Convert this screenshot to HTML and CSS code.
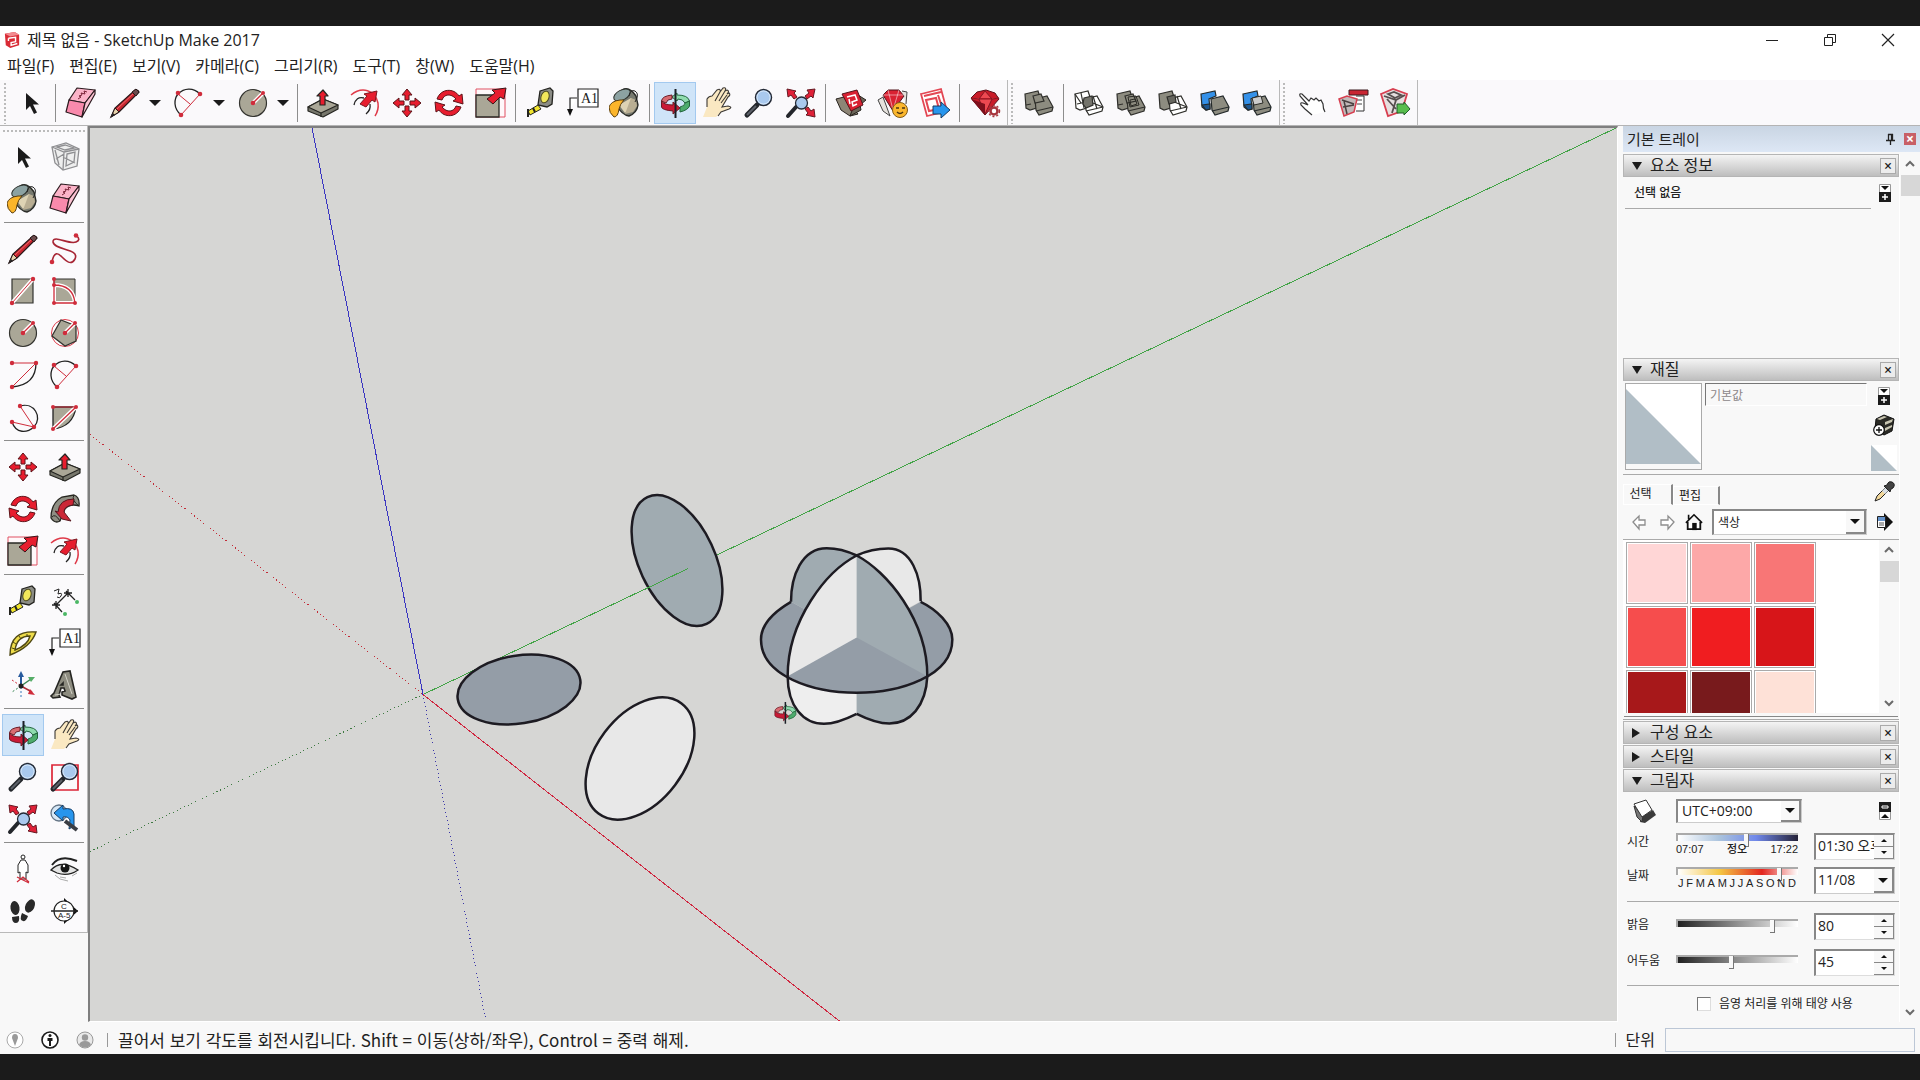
FILE: index.html
```html
<!DOCTYPE html>
<html lang="ko">
<head>
<meta charset="utf-8">
<title>제목 없음 - SketchUp Make 2017</title>
<link rel="stylesheet" href="styles.css">
</head>
<body>
<svg class="sprite" aria-hidden="true">
  <symbol id="cursor" viewBox="0 0 32 32"><path d="M11 6v17l4-4 4 8 3-1.500-4-8h6z" fill="#1b1b1b"/></symbol>
  <symbol id="eraser" viewBox="0 0 32 32"><g stroke="#2a1a1e" stroke-width="1.200" stroke-linejoin="round"><path d="M12 1 30 3 20 16 4 13Z" fill="#fbb3c8"/><path d="M4 13 20 16 17 30 1 25Z" fill="#f98aac"/><path d="M30 3v4L17 30l3-14Z" fill="#fcc3d3"/></g><path d="M13 12l3-2-2-1 3-1-1-2 4 1-1-3 3 1" fill="none" stroke="#7a2438"/></symbol>
  <symbol id="pencil" viewBox="0 0 32 32"><path d="M2 30 6 21 26 3q3-1 4 2L10 25Z" fill="#c8252f" stroke="#28191a" stroke-width="1.200"/><path d="M2 30 6 21l4 4Z" fill="#e8d3ac" stroke="#28191a"/><path d="M2 30l2-4 2 2Z" fill="#222"/><path d="M8 22 25 6" stroke="#ee6c6c"/><path d="m23 5 4 4 3-4-3-3Z" fill="#6b4a4c" stroke="#28191a"/></symbol>
  <symbol id="arc" viewBox="0 0 32 32"><path d="M8 28C0 21 1 12 5 7 11 1 20 0 27 7" fill="none" stroke="#222" stroke-width="1.300"/><path d="M8 28 27 7M5 7 17 17" stroke="#cf2c3b"/><g fill="#cf2c3b"><circle cx="8" cy="28" r="2.300"/><circle cx="27" cy="7" r="2.300"/><circle cx="5" cy="6" r="2.300"/></g></symbol>
  <symbol id="circle" viewBox="0 0 32 32"><circle cx="16" cy="16" r="13.500" fill="#aaa797" stroke="#33332f" stroke-width="1.200"/><path d="M16 16 26 6" stroke="#fff" stroke-width="4"/><path d="M16 16 26 6" stroke="#cf2c3b" stroke-width="1.300"/><g fill="#cf2c3b"><circle cx="16" cy="16" r="2.300"/><circle cx="26" cy="6" r="2"/></g></symbol>
  <symbol id="push" viewBox="0 0 32 32"><g stroke="#252521" stroke-linejoin="round" stroke-width="1.200"><path d="M1 20 16 12 31 18v4L16 30 1 24Z" fill="#77776c"/><path d="M1 20 16 12 31 18 14 26Z" fill="#aaa797"/><path d="M14 26v4" /><path d="M16 3 21 9h-3v9h-5V9h-3Z" fill="#e71d2e"/></g></symbol>
  <symbol id="offset" viewBox="0 0 32 32"><path d="M2 8C13-1 26 3 29 16q1 7-3 13" fill="none" stroke="#df3a49" stroke-width="1.500"/><path d="M5 18Q7 9 15 11M21 17q1 6-4 10" fill="none" stroke="#222" stroke-width="1.300"/><path d="M28 4 26 15l-3-2-6 7-6-3 7-8-3-2Z" fill="#e71d2e" stroke="#7c1720"/></symbol>
  <symbol id="move" viewBox="0 0 32 32"><path id="arrowhead" d="M16 2 21 8h-3v5h-4V8h-3Z" fill="#e71d2e" stroke="#5c1419"/><use href="#arrowhead" transform="rotate(90 16 16)"/><use href="#arrowhead" transform="rotate(180 16 16)"/><use href="#arrowhead" transform="rotate(270 16 16)"/></symbol>
  <symbol id="rotate" viewBox="0 0 32 32"><path id="turn" d="M4 12C8 1 21 1 26 9l3-2 1 10-10-3 3-2C18 6 11 7 9 13Z" fill="#e71d2e" stroke="#5c1419"/><use href="#turn" transform="rotate(180 16 16)"/></symbol>
  <symbol id="scale" viewBox="0 0 32 32"><path d="M1 2h29v28H1Z" fill="#fff8fa" stroke="#e05163"/><path d="M1 8h23v22H1Z" fill="#aaa797" stroke="#292925" stroke-width="1.300"/><path d="M31 1 29 12l-4-2-7 7-6-5 8-6-3-3Z" fill="#e71d2e" stroke="#3a1518"/></symbol>
  <symbol id="tape" viewBox="0 0 32 32"><path d="M15 4 25 1l3 3-1 13-5 3-9-2Z" fill="#8b8c86" stroke="#23231f" stroke-width="1.300"/><ellipse cx="20" cy="10" rx="4" ry="6" transform="rotate(18 20 10)" fill="#f3e85b" stroke="#4d4a20"/><path d="m13 18 3 4L5 28l-2-4Z" fill="#f1e52d" stroke="#23231f"/><path d="M3 22v8M8 21l2 4" stroke="#23231f" stroke-width="2"/></symbol>
  <symbol id="text" viewBox="0 0 32 32"><path d="M3 23V11h7M11 2h20v18H11Z" fill="#fff" stroke="#222" stroke-width="1.200"/><path d="M0 22h6l-3 7Z" fill="#111"/><text x="14" y="16" class="glyph">A1</text></symbol>
  <symbol id="bucket" viewBox="0 0 32 32"><path d="M13 3C18 0 23 3 27 9l2 9q-1 8-9 11-7-1-12-10Z" fill="#777a70" stroke="#2a2b27" stroke-width="1.400"/><path d="m10 18 12-7 4 5-10 10Z" fill="#ded3b4"/><path d="m22 11 5 2 1 6-4 6-8 2Z" fill="#b9ae93"/><ellipse cx="13" cy="8" rx="9" ry="5" transform="rotate(-28 13 8)" fill="#8ca2a2" stroke="#30342f"/><path d="M11 13Q2 14 0 20q0 6 5 10 4 0 5-8 1-5 5-9Z" fill="#fbb52b" stroke="#5b4012"/><path d="M20 9q1-7 6-5 5 3 0 11" fill="none" stroke="#222"/></symbol>
  <symbol id="orbit" viewBox="0 0 32 32"><path d="M18 8Q29 8 30.500 14L26 16q-2-4-7-4l-1 2-5-4 5-4Z" fill="#8fdcae" stroke="#23653d"/><path d="M30.500 14v5Q29 23 21 25v-5q5-1 5-4Z" fill="#4dab6c" stroke="#23653d"/><path d="M13 8Q3 9 2.500 14L7 16q1-4 6-4Z" fill="#d86b71" stroke="#6b1b25"/><path d="M2.500 14Q5 18 14 18v-3l7 6-7 6v-3Q3 23 2.500 20Z" fill="#ca1936" stroke="#6b1b25"/><path d="M16.500 2v29" stroke="#1c2027" stroke-width="2"/></symbol>
  <symbol id="hand" viewBox="0 0 32 32"><path d="M2 30 6 20 6 12q2-3 5-3L16 3q4-2 3 2l3-4q4-1 2 3l2-1q3 1 0 4l2-1q2 2-1 4l-6 10 6-1q5 1 1 3l-8 3-5 5Z" fill="#fae8c2"/><path d="M6 20V12q2-3 5-3L16 3q4-2 3 2l3-4q4-1 2 3l2-1q3 1 0 4l2-1q2 2-1 4l-6 10 6-1q5 1 1 3l-8 3-3 4M19 5l-5 9M24 4l-6 10M26 8l-6 8" fill="none" stroke="#3b3834" stroke-width="1.100"/></symbol>
  <symbol id="zoom" viewBox="0 0 32 32"><path d="M4 28 14 18" stroke="#23262b" stroke-width="5" stroke-linecap="round"/><path d="M4 28 13 19" stroke="#5c6068" stroke-width="2"/><circle cx="20.500" cy="10.500" r="8" fill="#a9c9ee" stroke="#242a35" stroke-width="1.500"/><circle cx="20.500" cy="10.500" r="6.500" fill="none" stroke="#d5e6f8"/></symbol>
  <symbol id="extents" viewBox="0 0 32 32"><path d="M3 29 11 20" stroke="#23262b" stroke-width="4" stroke-linecap="round"/><circle cx="16.500" cy="16" r="6" fill="#a9c9ee" stroke="#242a35" stroke-width="1.300"/><path id="corner" d="M2 2l9 2-2 2 3 4-3 2-3-4-3 2Z" fill="#df2138" stroke="#651821"/><use href="#corner" transform="rotate(90 16 16)"/><use href="#corner" transform="rotate(180 16 16)"/></symbol>
  <symbol id="warehouse" viewBox="0 0 32 32"><path d="m1 12 8-2 14 17-8 2-9-6Z" fill="#8d8576" stroke="#27231e"/><path d="m23 8 8 5-6 5 1 5-11 6Z" fill="#6b6558" stroke="#27231e"/><path d="m7 7 15-4 6 15-12 6Z" fill="#d92132" stroke="#53151b"/><path d="m12 10 8-2 2 5-5 2 1 4 4-2M14 12l1 5" fill="none" stroke="#fff" stroke-width="1.500"/></symbol>
  <symbol id="extwarehouse" viewBox="0 0 32 32"><path d="m1 13 5-3 7 19-7-5Z M25 4l5 1-1 12" fill="#e6e2dd" stroke="#444"/><path d="m6 8 5-5h11l5 6-11 15Z" fill="#d92132" stroke="#53151b"/><path d="m6 8h21M11 3l5 20 6-20" stroke="#fff" stroke-opacity=".5" fill="none"/><circle cx="23" cy="23" r="7.500" fill="#fbb72d" stroke="#815b18"/><path d="M19 21h3m3 0h3M20 25q3 3 6 0" stroke="#4c3512" fill="none" stroke-width="1.500"/></symbol>
  <symbol id="layout" viewBox="0 0 32 32"><path d="m2 7 20-5 6 22-20 5Z" fill="#fff" stroke="#e34653" stroke-width="1.800"/><path d="m5 9 17-4M7 13l10-2 3 11-10 2ZM19 8l4 12" fill="none" stroke="#e34653" stroke-width="2"/><path d="M14 19h8v-4l9 8-9 8v-4h-8Z" fill="#2795ed" stroke="#173b61"/></symbol>
  <symbol id="ruby" viewBox="0 0 32 32"><path d="m2 11 6-6 9-2 9 3 4 6-14 16Z" fill="#c91c29" stroke="#5b121a"/><path d="M2 11l8 1 6-8 7 8 7-1M10 12l6 15 7-15Z" fill="#ed4951" stroke="#861723"/><path d="M2 12 16 28V17Z" fill="#7e101c"/><circle cx="25" cy="24" r="3.500" fill="#fff" stroke="#a7353d" stroke-width="2.500"/><circle cx="25" cy="24" r="5.500" fill="none" stroke="#a7353d" stroke-width="1.500" stroke-dasharray="2 2"/></symbol>
  <symbol id="shell" viewBox="0 0 32 32"><g fill="#8d8c80" stroke="#2f2f2b" stroke-width="1.200"><path d="m2 7 13-3 2 6 3 9-13 4-4-2Z"/><path d="m3 18 5-1"/><path d="m12 12 12-3 6 11-1 4-13 4-3-5Z"/><path d="m13 24 17-4M10 9l8-2 3 7-9 2Z"/></g></symbol>
  <symbol id="intersect" viewBox="0 0 32 32"><g fill="#fff" stroke="#2f2f2b" stroke-width="1.200"><path d="m2 7 13-3 2 6 3 9-13 4-4-2Z"/><path d="m12 12 12-3 6 11-1 4-13 4-3-5Z"/><path d="m4 17 14-3M8 6l3 15M2 7l6 9M20 9l4 13M12 13l18 7M13 24l17-4"/><path d="m11 11 8-2 1 9-7 3-3-4Z" fill="#73736b"/></g></symbol>
  <symbol id="union" viewBox="0 0 32 32"><use href="#shell"/><path d="m15 13 5-1 2 5-6 2ZM13 10l8-1 3 9-9 2Z" fill="none" stroke="#2b2b26"/></symbol>
  <symbol id="subtract" viewBox="0 0 32 32"><g stroke="#2f2f2b" stroke-width="1.200"><path d="m2 7 13-3 2 6 3 9-13 4-4-2Z" fill="#8d8c80"/><path d="m12 12 12-3 6 11-1 4-13 4-3-5Z" fill="#fff"/><path d="M12 13l18 7M20 9l4 13M13 24l17-4" fill="none"/><path d="m10 10 8-2 1 7-7 2Z" fill="#66665f"/></g></symbol>
  <symbol id="trim" viewBox="0 0 32 32"><g stroke="#242a2b" stroke-width="1.200"><path d="m2 7 14-3 1 5-7 3 1 10-4 1-4-3Z" fill="#3591e8"/><path d="m3 18 8-1v5l-4 1Z" fill="#1d568e"/><path d="m12 12 12-3 6 11-1 4-13 4-3-5Z" fill="#8d8c80"/><path d="m13 24 17-4" /></g></symbol>
  <symbol id="split" viewBox="0 0 32 32"><use href="#trim"/><path d="m11 11 9-2 2 7-9 2Z" fill="#ccc" stroke="#2b2b26"/></symbol>
  <symbol id="pointer" viewBox="0 0 32 32"><path d="M17 28 10 22 6 18q-1-3 2-2l5 2L5 9q-1-3 2-2l7 7 2-3 3 2 2-2 3 3 2-1 2 4q0 5 2 8" fill="#fff" stroke="#333" stroke-width="1.200"/></symbol>
  <symbol id="attributes" viewBox="0 0 32 32"><path d="M12 3h19v5H12Z" fill="#c92532" stroke="#3a1b1f"/><path d="M19 9h8v15h-8" fill="#fff" stroke="#333"/><path d="M20 13h5m-5 4h5" stroke="#444"/><path d="m2 12 8-3 10 3-3 13-10 4Z" fill="#c3b9b9" stroke="#d73f50" stroke-width="1.500"/><path d="m5 13 12 4m-10-3 3 13m-4-7 11-2" stroke="#4a4141" stroke-width="1.500"/></symbol>
  <symbol id="component" viewBox="0 0 32 32"><path d="m2 7 12-5 14 5-5 17-14 5Z" fill="#e6dfdf" stroke="#d73f50" stroke-width="1.800"/><path d="m5 9 12 4 9-5M17 13l-4 13M8 12l9 10M9 7l6-2 7 3-6 3Z" fill="none" stroke="#574e4e" stroke-width="1.800"/><path d="M18 17h7v-2l6 7-6 6v-2h-7Z" fill="#58bd4d" stroke="#225c2b"/></symbol>
  <symbol id="ghost" viewBox="0 0 32 32"><g fill="none" stroke="#8f8f92" stroke-width="1.300"><path d="m3 6 14-4 13 6-2 17-14 4-8-7Z" fill="#eee"/><path d="m3 6 12 5 15-3M15 11l-1 18M6 9l4 15M18 13l8-2-1 10-8 4ZM8 6l8-2 9 3-9 2ZM14 16l12 6M7 18l8-5"/></g></symbol>
  <symbol id="freehand" viewBox="0 0 32 32"><path d="M3 29C5 18 9 20 13 24s9 9 13 2C31 15 6 18 4 9 4 1 20 12 27 9q5-2 1-6" fill="none" stroke="#a72635" stroke-width="1.600"/><circle cx="3" cy="29" r="2.300" fill="#cf2c3b"/><circle cx="27" cy="2.500" r="2.300" fill="#cf2c3b"/></symbol>
  <symbol id="rect" viewBox="0 0 32 32"><path d="M5 4h21v24H5Z" fill="#aaa797" stroke="#33332f" stroke-width="1.200"/><path d="M5 28 26 4" stroke="#fff" stroke-width="4"/><path d="M5 28 26 4" stroke="#cf2c3b"/><circle cx="5" cy="28" r="2.200" fill="#cf2c3b"/><circle cx="26" cy="4" r="2.200" fill="#cf2c3b"/></symbol>
  <symbol id="rotrect" viewBox="0 0 32 32"><path d="M5 4h21v24H5Z" fill="#aaa797" stroke="#33332f"/><path d="M5 28V10q19 0 21 18Z" fill="none" stroke="#fff" stroke-width="4"/><path d="M5 4v24h21Q24 10 5 10" fill="none" stroke="#cf2c3b" stroke-width="1.300"/><g fill="#cf2c3b"><circle cx="5" cy="4" r="2"/><circle cx="5" cy="10" r="2"/><circle cx="5" cy="28" r="2"/><circle cx="26" cy="28" r="2"/></g></symbol>
  <symbol id="polygon" viewBox="0 0 32 32"><circle cx="16" cy="16" r="13.500" fill="#fff" stroke="#df3a49"/><path d="m12 3 15 6v15l-11 5L3 19Z" fill="#aaa797" stroke="#33332f" stroke-width="1.300"/><path d="M16 16 26 6" stroke="#fff" stroke-width="4"/><path d="M16 16 26 6" stroke="#cf2c3b" stroke-width="1.300"/><circle cx="16" cy="16" r="2.300" fill="#cf2c3b"/><circle cx="26" cy="6" r="2" fill="#cf2c3b"/></symbol>
  <symbol id="arc2" viewBox="0 0 32 32"><path d="M29 4Q29 26 5 28" fill="none" stroke="#222" stroke-width="1.300"/><path d="M5 4h24L5 28" fill="none" stroke="#cf2c3b"/><g fill="#cf2c3b"><circle cx="5" cy="4" r="2.200"/><circle cx="29" cy="4" r="2.200"/><circle cx="5" cy="28" r="2.200"/></g></symbol>
  <symbol id="arc3" viewBox="0 0 32 32"><path d="M13 5C27 1 36 16 27 26 20 32 9 33 5 21" fill="none" stroke="#222" stroke-width="1.300"/><path d="m13 5 14 21L5 21" fill="none" stroke="#cf2c3b"/><g fill="#cf2c3b"><circle cx="13" cy="5" r="2.200"/><circle cx="27" cy="26" r="2.200"/><circle cx="5" cy="21" r="2.200"/></g></symbol>
  <symbol id="pie" viewBox="0 0 32 32"><path d="M4 6h23q-3 20-23 22Z" fill="#aaa797" stroke="#222" stroke-width="1.300"/><path d="M4 28 27 6" stroke="#fff" stroke-width="4"/><path d="M4 28 27 6H4" fill="none" stroke="#cf2c3b" stroke-width="1.200"/><g fill="#cf2c3b"><circle cx="4" cy="6" r="2"/><circle cx="27" cy="6" r="2"/><circle cx="4" cy="28" r="2"/></g></symbol>
  <symbol id="follow" viewBox="0 0 32 32"><path d="M25 2q6 2 5 11-9-3-14 3-3 7-5 12-5 3-9-3 0-15 11-21Z" fill="#8f8f84" stroke="#25251f" stroke-width="1.300"/><path d="M25 2q-3 5 5 11M3 24q3-4 8 4" fill="none" stroke="#25251f"/><path d="M25 6Q10 6 9 19l-3-1 7 8 9 2-7-9q0-6 9-7Z" fill="#cb2636" stroke="#571820"/></symbol>
  <symbol id="dimension" viewBox="0 0 32 32"><path d="m7 20 12-12M5 18l8 9M17 6l9 9M3 20h8M7 16v8M15 8h8M19 4v8" stroke="#222" stroke-width="1.300"/><circle cx="16" cy="29" r="2" fill="#4bb765"/><circle cx="28" cy="17" r="2" fill="#4bb765"/><path d="m5 6 5-2-1 5q5-2 3 2-1 3-4 1" fill="none" stroke="#222"/></symbol>
  <symbol id="protractor" viewBox="0 0 32 32"><path d="M3 28Q3 3 29 5 24 20 3 28ZM8 23Q21 18 23 9 10 9 8 23Z" fill="#eedc4a" fill-rule="evenodd" stroke="#4f4814" stroke-width="1.400"/><path d="m5 21 3 1M6 15l3 2m3-8 2 3m6-5v3" stroke="#4f4814"/></symbol>
  <symbol id="axes" viewBox="0 0 32 32"><path d="M14 18V7" stroke="#285b9e" stroke-width="2"/><path d="M11 8h6l-3-6Z" fill="#285b9e"/><path d="m14 17 10-7" stroke="#398653" stroke-width="1.500"/><path d="m21 8 7 0-4 5Z" fill="#55ad67"/><path d="m14 17 11 6" stroke="#ae2e38" stroke-width="1.500"/><path d="m23 20 5 6-7-1Z" fill="#cf2c3b"/><path d="M14 18v11" stroke="#397bbb" stroke-dasharray="2 2"/><path d="m5 11 9 6" stroke="#cf2c3b" stroke-dasharray="2 2"/><path d="m14 17-9 6" stroke="#398653" stroke-dasharray="2 2"/><circle cx="14" cy="17" r="2.500" fill="#222"/></symbol>
  <symbol id="text3d" viewBox="0 0 32 32"><path d="m5 24 9-21 7-1 6 26-4 2-10-4v-3l3-1-1-3h-3l-2 7 1 2-7 1-2-2Zm9-10-2 2h2Z" fill="#8d8c80" fill-rule="evenodd" stroke="#252522" stroke-width="1.600"/><path d="m16 5 7 20M6 26l6-1" stroke="#d2d1c7"/></symbol>
  <symbol id="zoomwin" viewBox="0 0 32 32"><path d="M3 4h26v25H3Z" fill="none" stroke="#dc2637" stroke-width="1.700"/><use href="#zoom"/></symbol>
  <symbol id="previous" viewBox="0 0 32 32"><circle cx="10" cy="10" r="8" fill="#d6e7f6" stroke="#657586" stroke-width="1.300"/><path d="m5 10 9-8v4q10-2 11 5v12l-5 3 1-9q-2-4-7-3v4Z" fill="#2795ed" stroke="#173b61"/><path d="m16 18 12 9" stroke="#3a3d43" stroke-width="4"/></symbol>
  <symbol id="person" viewBox="0 0 32 32"><g fill="#fff" stroke="#222"><circle cx="16" cy="4" r="2"/><path d="M14 7h4l3 5v8l-2-1v7h-6v-7l-2 1v-8Z"/></g><path d="m10 29 6-5 6 5M10 24l12 6" fill="none" stroke="#cf2c3b" stroke-width="1.300"/></symbol>
  <symbol id="eye" viewBox="0 0 32 32"><path d="M3 12Q11 1 28 8" fill="none" stroke="#222" stroke-width="2"/><path d="M2 17Q12 6 29 17q-10 7-21 3Z" fill="#e4e4e4" stroke="#222" stroke-width="1.300"/><circle cx="16" cy="15" r="4.500" fill="#161616"/><circle cx="15" cy="13" r="1.200" fill="#fff"/><path d="m6 22 5 4 8 2M23 23l5-3M11 24l6 1" stroke="#aaa" fill="none"/></symbol>
  <symbol id="feet" viewBox="0 0 32 32"><g fill="#292929"><ellipse cx="8" cy="13" rx="4.500" ry="7" transform="rotate(-8 8 13)"/><path d="m5 22 7-1q1 7-3 7-4 0-4-6Z"/><ellipse cx="23" cy="11" rx="4.500" ry="7" transform="rotate(25 23 11)"/><path d="m15 18 6 3q-2 6-5 5-4-1-1-8Z"/></g></symbol>
  <symbol id="section" viewBox="0 0 32 32"><path d="m15 3 14 13-14 13Z" fill="#111"/><circle cx="15" cy="16" r="10" fill="#fff" stroke="#222" stroke-width="1.200"/><path d="M2 16h27" stroke="#222" stroke-width="1.500"/><text x="12" y="14" class="glyph-s">C</text><text x="9" y="23" class="glyph-s">A-5</text></symbol>
  <symbol id="chev-up" viewBox="0 0 12 12"><path d="m2 8 4-4 4 4" fill="none" stroke="#6b6b6b" stroke-width="2"/></symbol>
  <symbol id="chev-down" viewBox="0 0 12 12"><path d="m2 4 4 4 4-4" fill="none" stroke="#6b6b6b" stroke-width="2"/></symbol>
  <symbol id="expand" viewBox="0 0 12 18"><path d="M.5.500h11v17H.5Z" fill="#fff" stroke="#999"/><path d="M2 2h8L6 6Z" fill="#111"/><path d="M0 8h12v10H0Z" fill="#1b1b1b"/><path d="M6 10v6M3 13h6" stroke="#fff" stroke-width="1.500"/></symbol>
  <symbol id="collapse" viewBox="0 0 12 18"><path d="M.5.500h11v17H.5Z" fill="#fff" stroke="#999"/><path d="M2 16h8l-4-4Z" fill="#111"/><path d="M0 0h12v10H0Z" fill="#1b1b1b"/><path d="M3 4h6v2H3Z" fill="none" stroke="#fff"/></symbol>
</svg>

<main class="app">
  <header class="titlebar">
    <svg class="logo" viewBox="0 0 18 20"><path d="m1 3 11-2 5 3v12l-10 3-5-3Z" fill="#d92b35"/><path d="M1 3 12 1l5 3-10 2Z" fill="#f28a8f"/><path d="M5 8l8-1v5l-5 1v3l7-2M5 8v3" fill="none" stroke="#fff" stroke-width="1.600"/></svg>
    <h1 class="title">제목 없음 - SketchUp Make 2017</h1>
    <div class="winbtns">
      <button aria-label="최소화"><svg viewBox="0 0 14 14"><path d="M1 7.500h12" stroke="#222"/></svg></button>
      <button aria-label="이전 크기로"><svg viewBox="0 0 14 14"><path d="M1.500 4.500h8v8h-8zM4.500 4V1.500h8v8H10" fill="none" stroke="#222"/></svg></button>
      <button aria-label="닫기"><svg viewBox="0 0 14 14"><path d="m1 1 12 12M13 1 1 13" stroke="#222" stroke-width="1.200"/></svg></button>
    </div>
  </header>
  <nav class="menubar">
    <button>파일(F)</button><button>편집(E)</button><button>보기(V)</button><button>카메라(C)</button><button>그리기(R)</button><button>도구(T)</button><button>창(W)</button><button>도움말(H)</button>
  </nav>

  <div class="toolbar">
    <div class="group">
      <span class="grip"></span>
      <button class="tool" aria-label="선택"><svg><use href="#cursor"/></svg></button>
      <span class="sep"></span>
      <button class="tool" aria-label="지우개"><svg><use href="#eraser"/></svg></button>
      <button class="tool split" aria-label="선"><svg><use href="#pencil"/></svg></button><button class="caret" aria-label="선 도구 더 보기"></button>
      <button class="tool split" aria-label="호"><svg><use href="#arc"/></svg></button><button class="caret" aria-label="호 도구 더 보기"></button>
      <button class="tool split" aria-label="원"><svg><use href="#circle"/></svg></button><button class="caret" aria-label="도형 도구 더 보기"></button>
      <span class="sep"></span>
      <button class="tool" aria-label="밀기/끌기"><svg><use href="#push"/></svg></button>
      <button class="tool" aria-label="오프셋"><svg><use href="#offset"/></svg></button>
      <button class="tool" aria-label="이동"><svg><use href="#move"/></svg></button>
      <button class="tool" aria-label="회전"><svg><use href="#rotate"/></svg></button>
      <button class="tool" aria-label="배율"><svg><use href="#scale"/></svg></button>
      <span class="sep"></span>
      <button class="tool" aria-label="줄자"><svg><use href="#tape"/></svg></button>
      <button class="tool" aria-label="텍스트"><svg><use href="#text"/></svg></button>
      <button class="tool" aria-label="페인트통"><svg><use href="#bucket"/></svg></button>
      <span class="sep"></span>
      <button class="tool active" aria-label="궤도"><svg><use href="#orbit"/></svg></button>
      <button class="tool" aria-label="이동 보기"><svg><use href="#hand"/></svg></button>
      <button class="tool" aria-label="확대/축소"><svg><use href="#zoom"/></svg></button>
      <button class="tool" aria-label="범위 확대/축소"><svg><use href="#extents"/></svg></button>
      <span class="sep"></span>
      <button class="tool" aria-label="3D 웨어하우스"><svg><use href="#warehouse"/></svg></button>
      <button class="tool" aria-label="확장 웨어하우스"><svg><use href="#extwarehouse"/></svg></button>
      <button class="tool" aria-label="LayOut으로 보내기"><svg><use href="#layout"/></svg></button>
      <span class="sep"></span>
      <button class="tool" aria-label="확장 관리자"><svg><use href="#ruby"/></svg></button>
    </div>
    <div class="group">
      <span class="grip"></span>
      <button class="tool" aria-label="외부 쉘"><svg><use href="#shell"/></svg></button>
      <span class="sep"></span>
      <button class="tool" aria-label="교차"><svg><use href="#intersect"/></svg></button>
      <button class="tool" aria-label="결합"><svg><use href="#union"/></svg></button>
      <button class="tool" aria-label="빼기"><svg><use href="#subtract"/></svg></button>
      <button class="tool" aria-label="트림"><svg><use href="#trim"/></svg></button>
      <button class="tool" aria-label="분할"><svg><use href="#split"/></svg></button>
    </div>
    <div class="group">
      <span class="grip"></span>
      <button class="tool" aria-label="상호 작용"><svg><use href="#pointer"/></svg></button>
      <button class="tool" aria-label="구성 요소 옵션"><svg><use href="#attributes"/></svg></button>
      <button class="tool" aria-label="구성 요소 속성"><svg><use href="#component"/></svg></button>
    </div>
  </div>

  <div class="work">
    <aside class="side">
      <div class="palette">
        <span class="hgrip"></span>
        <button class="tool" aria-label="선택"><svg><use href="#cursor"/></svg></button>
        <button class="tool" aria-label="구성 요소 만들기"><svg><use href="#ghost"/></svg></button>
        <button class="tool" aria-label="페인트통"><svg><use href="#bucket"/></svg></button>
        <button class="tool" aria-label="지우개"><svg><use href="#eraser"/></svg></button>
        <span class="hsep"></span>
        <button class="tool" aria-label="선"><svg><use href="#pencil"/></svg></button>
        <button class="tool" aria-label="자유선"><svg><use href="#freehand"/></svg></button>
        <button class="tool" aria-label="직사각형"><svg><use href="#rect"/></svg></button>
        <button class="tool" aria-label="회전 직사각형"><svg><use href="#rotrect"/></svg></button>
        <button class="tool" aria-label="원"><svg><use href="#circle"/></svg></button>
        <button class="tool" aria-label="다각형"><svg><use href="#polygon"/></svg></button>
        <button class="tool" aria-label="호"><svg><use href="#arc2"/></svg></button>
        <button class="tool" aria-label="2점 호"><svg><use href="#arc"/></svg></button>
        <button class="tool" aria-label="3점 호"><svg><use href="#arc3"/></svg></button>
        <button class="tool" aria-label="파이"><svg><use href="#pie"/></svg></button>
        <span class="hsep"></span>
        <button class="tool" aria-label="이동"><svg><use href="#move"/></svg></button>
        <button class="tool" aria-label="밀기/끌기"><svg><use href="#push"/></svg></button>
        <button class="tool" aria-label="회전"><svg><use href="#rotate"/></svg></button>
        <button class="tool" aria-label="따라가기"><svg><use href="#follow"/></svg></button>
        <button class="tool" aria-label="배율"><svg><use href="#scale"/></svg></button>
        <button class="tool" aria-label="오프셋"><svg><use href="#offset"/></svg></button>
        <span class="hsep"></span>
        <button class="tool" aria-label="줄자"><svg><use href="#tape"/></svg></button>
        <button class="tool" aria-label="치수"><svg><use href="#dimension"/></svg></button>
        <button class="tool" aria-label="각도기"><svg><use href="#protractor"/></svg></button>
        <button class="tool" aria-label="텍스트"><svg><use href="#text"/></svg></button>
        <button class="tool" aria-label="축"><svg><use href="#axes"/></svg></button>
        <button class="tool" aria-label="3D 텍스트"><svg><use href="#text3d"/></svg></button>
        <span class="hsep"></span>
        <button class="tool active" aria-label="궤도"><svg><use href="#orbit"/></svg></button>
        <button class="tool" aria-label="이동 보기"><svg><use href="#hand"/></svg></button>
        <button class="tool" aria-label="확대/축소"><svg><use href="#zoom"/></svg></button>
        <button class="tool" aria-label="창 확대/축소"><svg><use href="#zoomwin"/></svg></button>
        <button class="tool" aria-label="범위 확대/축소"><svg><use href="#extents"/></svg></button>
        <button class="tool" aria-label="이전"><svg><use href="#previous"/></svg></button>
        <span class="hsep"></span>
        <button class="tool" aria-label="카메라 배치"><svg><use href="#person"/></svg></button>
        <button class="tool" aria-label="둘러보기"><svg><use href="#eye"/></svg></button>
        <button class="tool" aria-label="걷기"><svg><use href="#feet"/></svg></button>
        <button class="tool" aria-label="단면"><svg><use href="#section"/></svg></button>
      </div>
    </aside>

    <section class="viewport">
      <svg viewBox="90 128 1527 894" preserveAspectRatio="xMidYMid slice">
        <g fill="none" shape-rendering="crispEdges">
          <path d="M312 128 423 695" stroke="#3a35c0"/>
          <path d="m423 695 63 327" stroke="#3a35a8" stroke-dasharray="1 3"/>
          <path d="M423 695 1617 128" stroke="#43a447"/>
          <path d="M90 852 423 695" stroke="#3f7a42" stroke-dasharray="1 3"/>
          <path d="m423 695 417 327" stroke="#cf2740"/>
          <path d="m90 435 333 260" stroke="#c22c38" stroke-dasharray="1 3"/>
        </g>
        <g stroke="#1d1b22" stroke-width="2.500">
          <ellipse cx="677" cy="561" rx="70" ry="38" transform="rotate(65 677 561)" fill="#a0abb1"/>
          <ellipse cx="519" cy="690" rx="62" ry="34" transform="rotate(-9 519 690)" fill="#949da7"/>
          <ellipse cx="640" cy="759" rx="69" ry="44" transform="rotate(-53 640 759)" fill="#e8e8e8"/>
        </g>
        <path d="m632 596 56-27" stroke="#43a447" shape-rendering="crispEdges"/>
        <g transform="translate(600 480) scale(.33333)">
          <path d="M770 228C745 216 715 206 680 206 605 206 573 290 573 367L620 392Z" fill="#a0abb1"/>
          <path d="M770 228C800 214 830 207 865 207 935 207 963 290 962 365L920 388Z" fill="#e8e8e8"/>
          <path d="M573 367C525 395 483 435 483 480 483 590 640 640 770 640S1057 590 1057 480C1057 435 1010 390 962 367L770 474Z" fill="#949da7"/>
          <path d="M770 228C680 275 563 420 563 590L770 474Z" fill="#e8e8e8"/>
          <path d="M770 228C860 275 982 420 982 590L770 474Z" fill="#a0abb1"/>
          <path d="M563 590C563 680 610 733 672 733 705 733 740 718 770 703V640C700 640 625 625 563 590Z" fill="#eee"/>
          <path d="M982 590C978 680 930 732 868 732 835 732 800 718 770 703V640C850 640 920 625 982 590Z" fill="#a0abb1"/>
          <g fill="none" stroke="#1d1b22" stroke-width="7.500" stroke-linejoin="round">
            <path d="M962 365C963 290 935 207 865 207 830 207 800 214 770 228 680 275 563 420 563 590 563 680 610 733 672 733 705 733 740 718 770 703"/>
            <path d="M573 367C573 290 605 206 680 206 715 206 745 216 770 228 860 275 982 420 982 590 978 680 930 732 868 732 835 732 800 718 770 703"/>
            <path d="M573 367C525 395 483 435 483 480 483 590 640 640 770 640S1057 590 1057 480C1057 435 1010 390 962 367"/>
          </g>
        </g>
        <use href="#orbit" x="773" y="701" width="24" height="24"/>
      </svg>
    </section>

    <aside class="tray">
      <header class="trayhead"><h2>기본 트레이</h2>
        <button class="pin" aria-label="고정"><svg viewBox="0 0 10 12"><path d="M2.500 1v6M2 1.500h5M6.500 1v6M5.500 2v5M0 7.500h9M4.500 8v4" stroke="#222" fill="none" stroke-width="1.300"/></svg></button>
        <button class="trayclose" aria-label="트레이 닫기">×</button></header>
      <div class="traybody">
        <div class="panels">
          <section class="entity">
            <header class="panel open"><i></i><h3>요소 정보</h3><button aria-label="닫기">×</button></header>
            <div class="entbody"><p>선택 없음</p><button class="toggle" aria-label="세부 정보"><svg><use href="#expand"/></svg></button></div>
          </section>
          <section>
            <header class="panel open"><i></i><h3>재질</h3><button aria-label="닫기">×</button></header>
            <div class="material">
              <div class="preview"><svg viewBox="0 0 75 85" preserveAspectRatio="none"><path d="M0 0h75v80H0Z" fill="#fff"/><path d="m0 5 75 75H0Z" fill="#b1bec6"/></svg></div>
              <input class="matname" type="text" value="기본값" aria-label="재질 이름">
              <div class="matside">
                <button class="toggle" aria-label="보조 창"><svg><use href="#expand"/></svg></button>
                <button class="create" aria-label="재질 만들기"><svg viewBox="0 0 22 22"><path d="m3 5 8-4 10 4-2 12-8 4-9-6Z" fill="#2b2b26" stroke="#111"/><path d="m4 5 7-3 3 1-7 3ZM12 8l8-3-1 3-7 3ZM12 14l7-3v2l-7 4Z" fill="#c9c6b2"/><circle cx="6" cy="16" r="5.300" fill="#fff" stroke="#111" stroke-width="1.200"/><path d="M6 13v6M3 16h6" stroke="#111" stroke-width="1.300"/></svg></button>
                <button class="default" aria-label="기본 재질"><svg viewBox="0 0 26 26"><path d="M0 0h26v26H0Z" fill="#fff"/><path d="m0 0 26 26H0Z" fill="#b1bec6"/></svg></button>
              </div>
            </div>
            <div class="tabs"><button class="tab on">선택</button><button class="tab">편집</button>
              <button class="dropper" aria-label="샘플 페인트"><svg viewBox="0 0 22 22"><path d="m2 20 2-5 8-8 3 3-8 8Z" fill="#f1d79a" stroke="#222"/><path d="m9 10 4-4 3 3-4 4Z" fill="#d9dfe4"/><path d="m11 5 6 6 1-3 2-1q3-4-1-6-3-1-4 1l-1 2Z" fill="#444" stroke="#1e1e1e"/></svg></button></div>
            <div class="browse">
              <button aria-label="뒤로"><svg viewBox="0 0 18 18"><path d="m2 9 6-6v4h6v5H8v4Z" fill="#fff" stroke="#8d8d8d" stroke-width="1.300"/></svg></button>
              <button aria-label="앞으로"><svg viewBox="0 0 18 18"><path d="m16 9-6-6v4H3v5h7v4Z" fill="#fff" stroke="#8d8d8d" stroke-width="1.300"/></svg></button>
              <button aria-label="모델에서"><svg viewBox="0 0 20 20"><path d="M3 10v8h14v-8" fill="#fff" stroke="#111" stroke-width="2"/><path d="m1 11 9-9 9 9M4 2v5" fill="none" stroke="#111" stroke-width="1.800"/><path d="M8 11h5v8H8Z" fill="#111"/></svg></button>
              <label class="drop"><select aria-label="재질 모음"><option>색상</option></select><b></b></label>
              <button aria-label="세부 정보"><svg viewBox="0 0 18 18"><path d="m8 0 9 9-9 9Z" fill="#111"/><path d="M1.500 3.500h8v11h-8Z" fill="#fff" stroke="#222"/><path d="M2 4h7v4H2Z" fill="#6593cb"/><path d="M3 10h5M3 12h5" stroke="#555"/></svg></button>
            </div>
            <div class="colors">
              <div class="swatches">
                <button style="background-color:#ffd6d6" aria-label="색상 A01"></button><button style="background-color:#fda8a8" aria-label="색상 A02"></button><button style="background-color:#f87676" aria-label="색상 A03"></button>
                <button style="background-color:#f64d4d" aria-label="색상 A04"></button><button style="background-color:#f01d20" aria-label="색상 A05"></button><button style="background-color:#d71519" aria-label="색상 A06"></button>
                <button style="background-color:#a7181a" aria-label="색상 A07"></button><button style="background-color:#781a1c" aria-label="색상 A08"></button><button style="background-color:#fee1d7" aria-label="색상 B01"></button>
              </div>
              <div class="scroll"><svg><use href="#chev-up"/></svg><span></span><svg class="end"><use href="#chev-down"/></svg></div>
            </div>
          </section>
          <header class="panel"><i></i><h3>구성 요소</h3><button aria-label="닫기">×</button></header>
          <header class="panel"><i></i><h3>스타일</h3><button aria-label="닫기">×</button></header>
          <section>
            <header class="panel open"><i></i><h3>그림자</h3><button aria-label="닫기">×</button></header>
            <div class="zone">
              <button class="shadow" aria-label="그림자 표시"><svg viewBox="0 0 26 26"><path d="m9 19 12-7 3 5-11 8-5-1Z" fill="#3b3b3b"/><path d="m2 8 3 11 5 5 1-6Z" fill="#777" stroke="#333"/><path d="m2 6 12-4 6 10-10 7Z" fill="#fff" stroke="#333"/></svg></button>
              <label class="drop tz"><select aria-label="시간대"><option>UTC+09:00</option></select><b></b></label>
              <button class="toggle" aria-label="세부 정보 숨기기"><svg><use href="#collapse"/></svg></button>
            </div>
            <div class="row">
              <label for="time">시간</label>
              <div class="slide"><input id="time" class="time" type="range" min="0" max="100" value="57"><div class="ticks"><span>07:07</span><span>정오</span><span>17:22</span></div></div>
              <div class="spin"><input type="text" value="01:30 오후" aria-label="시간 값"><div><button aria-label="증가"></button><button aria-label="감소" class="down"></button></div></div>
            </div>
            <div class="row">
              <label for="date">날짜</label>
              <div class="slide"><input id="date" class="date" type="range" min="0" max="100" value="86"><div class="ticks months"><span>J</span><span>F</span><span>M</span><span>A</span><span>M</span><span>J</span><span>J</span><span>A</span><span>S</span><span>O</span><span>N</span><span>D</span></div></div>
              <label class="drop day"><select aria-label="날짜 값"><option>11/08</option></select><b></b></label>
            </div>
            <hr>
            <div class="row level">
              <label for="light">밝음</label>
              <div class="slide"><input id="light" class="grey" type="range" min="0" max="100" value="80"></div>
              <div class="spin"><input type="text" value="80" aria-label="밝음 값"><div><button aria-label="증가"></button><button aria-label="감소" class="down"></button></div></div>
            </div>
            <div class="row level">
              <label for="dark">어두움</label>
              <div class="slide"><input id="dark" class="grey" type="range" min="0" max="100" value="44"></div>
              <div class="spin"><input type="text" value="45" aria-label="어두움 값"><div><button aria-label="증가"></button><button aria-label="감소" class="down"></button></div></div>
            </div>
            <hr>
            <label class="sun"><input type="checkbox">음영 처리를 위해 태양 사용</label>
          </section>
        </div>
        <div class="scroll"><svg><use href="#chev-up"/></svg><span></span><svg class="end"><use href="#chev-down"/></svg></div>
      </div>
    </aside>
  </div>

  <footer class="status">
    <button aria-label="위치"><svg viewBox="0 0 18 18"><circle cx="9" cy="9" r="8" fill="#fff" stroke="#aaa"/><path d="M9 15 6 7q0-4 3-4t3 4Z" fill="#999"/></svg></button>
    <button aria-label="크레딧"><svg viewBox="0 0 18 18"><circle cx="9" cy="9" r="8" fill="#fff" stroke="#1b1b1b" stroke-width="1.600"/><circle cx="9" cy="4.500" r="1.500" fill="#1b1b1b"/><path d="M6.500 7h5v3H10v5H8v-5H6.500Z" fill="#1b1b1b"/></svg></button>
    <button aria-label="로그인"><svg viewBox="0 0 18 18"><circle cx="9" cy="9" r="8" fill="#e9e9e9" stroke="#999"/><circle cx="9" cy="6.500" r="3.200" fill="#999"/><path d="M3 14q1-4 6-4t6 4q-6 5-12 0Z" fill="#999"/></svg></button>
    <span class="rule"></span>
    <p>끌어서 보기 각도를 회전시킵니다. Shift = 이동(상하/좌우), Control = 중력 해제.</p>
    <span class="rule"></span>
    <label for="unit">단위</label><input id="unit" type="text">
  </footer>
</main>
</body>
</html>
```
FILE: styles.css
```css
* { box-sizing: border-box; }
html, body { height: 100%; }
body {
  margin: 0;
  padding: 26px 0;
  background: #1b1b1b;
  color: #222;
  font: 16px/24px "Open Sans", "Noto Sans CJK KR", sans-serif;
  overflow: hidden;
}
h1, h2, h3, p { margin: 0; font-size: inherit; font-weight: 400; }
button, input, select {
  margin: 0;
  padding: 0;
  border: 0;
  border-radius: 0;
  background: none;
  color: inherit;
  font: inherit;
  outline: 0;
}
button { display: flex; align-items: center; justify-content: center; flex: none; }
svg { display: block; }
.sprite { display: none; }
.glyph { font: 14px "Liberation Serif", serif; fill: #222; }
.glyph-s { font: 8px "Liberation Sans", sans-serif; fill: #222; }

.app { display: flex; flex-direction: column; height: 100%; background: #f8f8f8; }

/* title and menu */
.titlebar { display: flex; align-items: center; height: 28px; padding-left: 4px; background: #fff; }
.logo { width: 16px; height: 18px; margin-right: 7px; }
.title { flex: 1; }
.winbtns { display: flex; padding-right: 3px; }
.winbtns button { width: 58px; height: 28px; }
.winbtns svg { width: 14px; height: 14px; }
.menubar { display: flex; gap: 15px; height: 26px; padding: 0 0 2px 7px; background: #fff; }

/* tool bars */
.toolbar { display: flex; height: 46px; background: #faf9fb; border-bottom: 1px solid #b4b4b4; }
.group { display: flex; align-items: center; padding-right: 1px; border-right: 1px solid #b9b9b9; }
.grip { width: 10px; height: 42px; background: radial-gradient(#bbb 1px, transparent 1px) 3px 0 / 4px 4px repeat-y; }
.group + .group .grip { background-position: 2px 0; }
.tool { width: 42px; height: 42px; }
.tool svg { width: 32px; height: 32px; }
.tool.split { padding-left: 4px; }
.tool.active { background: #cfe4f8; border: 1px solid #a3c9ef; }
.caret { width: 22px; height: 42px; }
.caret::after { content: ""; border: 6px solid transparent; border-top-color: #1b1b1b; border-bottom: 0; }
.sep { width: 1px; height: 38px; margin: 0 4px 0 3px; background: #8d8d8d; }

.work { display: flex; flex: 1; min-height: 0; }
.side { width: 88px; flex: none; }
.palette {
  display: grid;
  grid-template-columns: 42px 42px;
  padding: 0 2px;
  background: #fbfafc;
  border-right: 1px solid #b9b9b9;
  border-bottom: 1px solid #b9b9b9;
}
.hgrip { grid-column: 1 / -1; height: 10px; background: radial-gradient(#bbb 1px, transparent 1px) 0 3px / 4px 4px repeat-x; }
.hsep { grid-column: 1 / -1; height: 1px; margin: 2px 2px 5px; background: #8d8d8d; }

.viewport {
  flex: 1;
  min-width: 0;
  background: #d6d6d4;
  border: 2px solid #7f7f7f;
  border-right: 1px solid #fff;
  border-bottom: 1px solid #fff;
  overflow: hidden;
}
.viewport > svg { width: 100%; height: 100%; }

/* tray */
.tray { display: flex; flex-direction: column; width: 297px; margin-left: 5px; flex: none; font-size: 12px; line-height: 18px; }
.trayhead {
  display: flex;
  align-items: center;
  height: 26px;
  padding: 0 4px;
  background: linear-gradient(#c9d5e3, #dde7f5);
  font-size: 15px;
}
.trayhead h2 { flex: 1; }
.pin svg { width: 10px; height: 12px; }
.trayclose { width: 12px; height: 12px; margin-left: 8px; background: #c85f66; color: #fff; font-size: 14px; line-height: 12px; font-weight: 700; }
.traybody { display: flex; flex: 1; min-height: 0; padding-top: 2px; }
.panels { flex: 1; border-right: 1px solid #fff; overflow: hidden; }
.panel {
  display: flex;
  align-items: center;
  height: 23px;
  margin-bottom: 1px;
  padding: 0 2px 0 8px;
  background: linear-gradient(#f4f4f4, #bebebe);
  border: 1px solid #b5b5b5;
  font-size: 16px;
}
.panel h3 { flex: 1; line-height: 18px; padding-bottom: 2px; }
.panel i { width: 18px; display: flex; }
.panel i::after { content: ""; border: 5px solid transparent; border-left: 8px solid #1b1b1b; border-right: 0; }
.panel.open i::after { border: 5px solid transparent; border-top: 8px solid #1b1b1b; border-bottom: 0; }
.panel button { width: 16px; height: 16px; background: #ececec; border: 1px solid #aaa; font-size: 14px; line-height: 14px; font-weight: 600; }
.toggle { width: 12px; height: 18px; }
.toggle svg { width: 12px; height: 18px; }
.entity { height: 204px; }
.entbody { display: flex; justify-content: space-between; align-items: start; padding: 6px 8px 0 2px; }
.entbody p { width: 246px; padding: 0 0 6px 9px; border-bottom: 1px solid #aaa; font-weight: 500; }

.material { display: grid; grid-template-columns: 77px 162px 1fr; column-gap: 3px; padding: 1px 2px 3px; border-bottom: 1px solid #aaa; align-items: start; }
.preview { height: 87px; border: 1px solid #aaa; }
.preview svg { width: 100%; height: 85px; }
.matname { width: 100%; height: 23px; padding: 0 4px; border: 1px solid #fff; border-top-color: #777; border-left-color: #777; color: #8c8789; }
.matside { display: flex; flex-direction: column; align-items: center; gap: 9px; padding-top: 4px; }
.create svg { width: 22px; height: 22px; }
.default svg { width: 26px; height: 26px; }
.tabs { display: flex; align-items: end; height: 30px; }
.tab { width: 47px; height: 19px; border: 1px solid #fff; border-right: 2px solid #888; padding-right: 12px; }
.tab.on { width: 50px; height: 21px; padding: 0 14px 2px 0; }
.dropper { margin-left: auto; padding: 0 4px 2px; }
.dropper svg { width: 22px; height: 22px; }
.browse { display: flex; align-items: center; gap: 9px; height: 35px; padding: 0 5px 0 8px; border-bottom: 1px solid #aaa; }
.browse svg { width: 18px; height: 18px; }
.drop { display: flex; flex: 1; height: 26px; background: #fff; border: 1px solid #ccc; border-top: 2px solid #888; border-left: 2px solid #888; }
.drop select { appearance: none; flex: 1; min-width: 0; padding-left: 4px; }
.drop b { width: 20px; display: flex; align-items: center; justify-content: center; background: #f8f8f8; border-right: 2px solid #888; border-bottom: 2px solid #888; pointer-events: none; }
.drop b::after { content: ""; border: 5px solid transparent; border-top-color: #111; border-bottom: 0; }
.colors { display: flex; height: 173px; background: #fff; margin-bottom: 3px; }
.colors + * { margin-top: 0; }
.swatches { display: grid; grid-template-columns: repeat(3, 62px); grid-auto-rows: 62px; gap: 2px; flex: 1; padding: 2px 3px; overflow: hidden; align-content: start; }
.swatches button { border: 1px solid #aaa; box-shadow: inset 0 0 0 1px #fff; }
.entity + section { padding-bottom: 3px; border-bottom: 1px solid #aaa; margin-bottom: 1px; }
.entity + section .colors { box-shadow: 0 4px 0 -1px #f8f8f8, 0 5px 0 -1px #888; }
.scroll { display: flex; flex-direction: column; align-items: center; width: 20px; padding: 4px 0; background: #f8f8f8; }
.scroll svg { width: 12px; height: 12px; }
.scroll span { width: 19px; height: 21px; margin-top: 5px; background: #d7d7d7; }
.scroll .end { margin-top: auto; }

.zone { display: flex; align-items: center; height: 36px; padding: 0 8px 0 9px; }
.shadow { margin-right: 18px; }
.shadow svg { width: 26px; height: 26px; }
.tz { flex: none; width: 126px; height: 24px; font-size: 14px; }
.tz select { padding: 0 0 2px 4px; }
.zone .toggle { margin-left: auto; }
.row { display: grid; grid-template-columns: 49px 138px 81px; align-items: start; min-height: 34px; padding: 4px 0 0 4px; }
.level { min-height: 36px; }
.level .slide { padding-top: 6px; }
.level label { padding-top: 3px; }
.slide { width: 122px; }
.slide input { appearance: none; display: block; width: 122px; height: 8px; border-top: 2px solid #aaa; border-left: 2px solid #aaa; }
.slide input::-webkit-slider-thumb { appearance: none; width: 5px; height: 13px; margin-top: 4px; background: #f8f8f8; border-right: 1px solid #777; border-bottom: 1px solid #777; }
.time { background: linear-gradient(90deg, #fff, #a9c2dd 35%, #7088ea 65%, #252238); }
.date { background: linear-gradient(90deg, #fff, #f4c543 35%, #e3261f 70%, #fff); }
.grey { background: linear-gradient(90deg, #222, #fff); }
.ticks { display: flex; justify-content: space-between; font: 500 11px/16px "Liberation Sans", "Noto Sans CJK KR", sans-serif; }
.months { padding: 0 2px; }
.spin { display: flex; height: 27px; background: #fff; border: 1px solid #ddd; border-top: 2px solid #888; border-left: 2px solid #888; font-size: 14px; }
.spin input { flex: 1; min-width: 0; padding: 0 0 2px 2px; }
.spin > div { width: 20px; display: grid; }
.spin button { background: #f8f8f8; border-right: 1px solid #888; border-bottom: 1px solid #888; }
.spin button::after { content: ""; border: 3px solid transparent; border-bottom-color: #111; border-top: 0; }
.spin .down::after { border: 3px solid transparent; border-top-color: #111; border-bottom: 0; }
.day { height: 27px; font-size: 14px; }
.day select { padding: 0 0 2px 2px; }
hr { height: 1px; margin: 4px 0 7px 4px; border: 0; background: #aaa; }
.sun { display: flex; align-items: center; gap: 8px; padding: 2px 0 0 74px; }
.sun input { appearance: none; width: 14px; height: 14px; background: #fff; border: 1px solid #ddd; border-top-color: #777; border-left-color: #777; }

/* status bar */
.status { display: flex; align-items: center; height: 32px; padding: 4px 5px 0 6px; }
.status button { margin-right: 17px; }
.status button svg { width: 18px; height: 18px; }
.status .rule { width: 1px; height: 14px; background: #999; }
.status button + .rule { margin-left: -4px; }
.status p { flex: 1; padding-left: 10px; font-family: "Noto Sans CJK KR", sans-serif; font-size: 17px; }
.status label { padding: 0 10px; }
.status input { width: 250px; height: 24px; border: 1px solid #bcc7d6; }
```
